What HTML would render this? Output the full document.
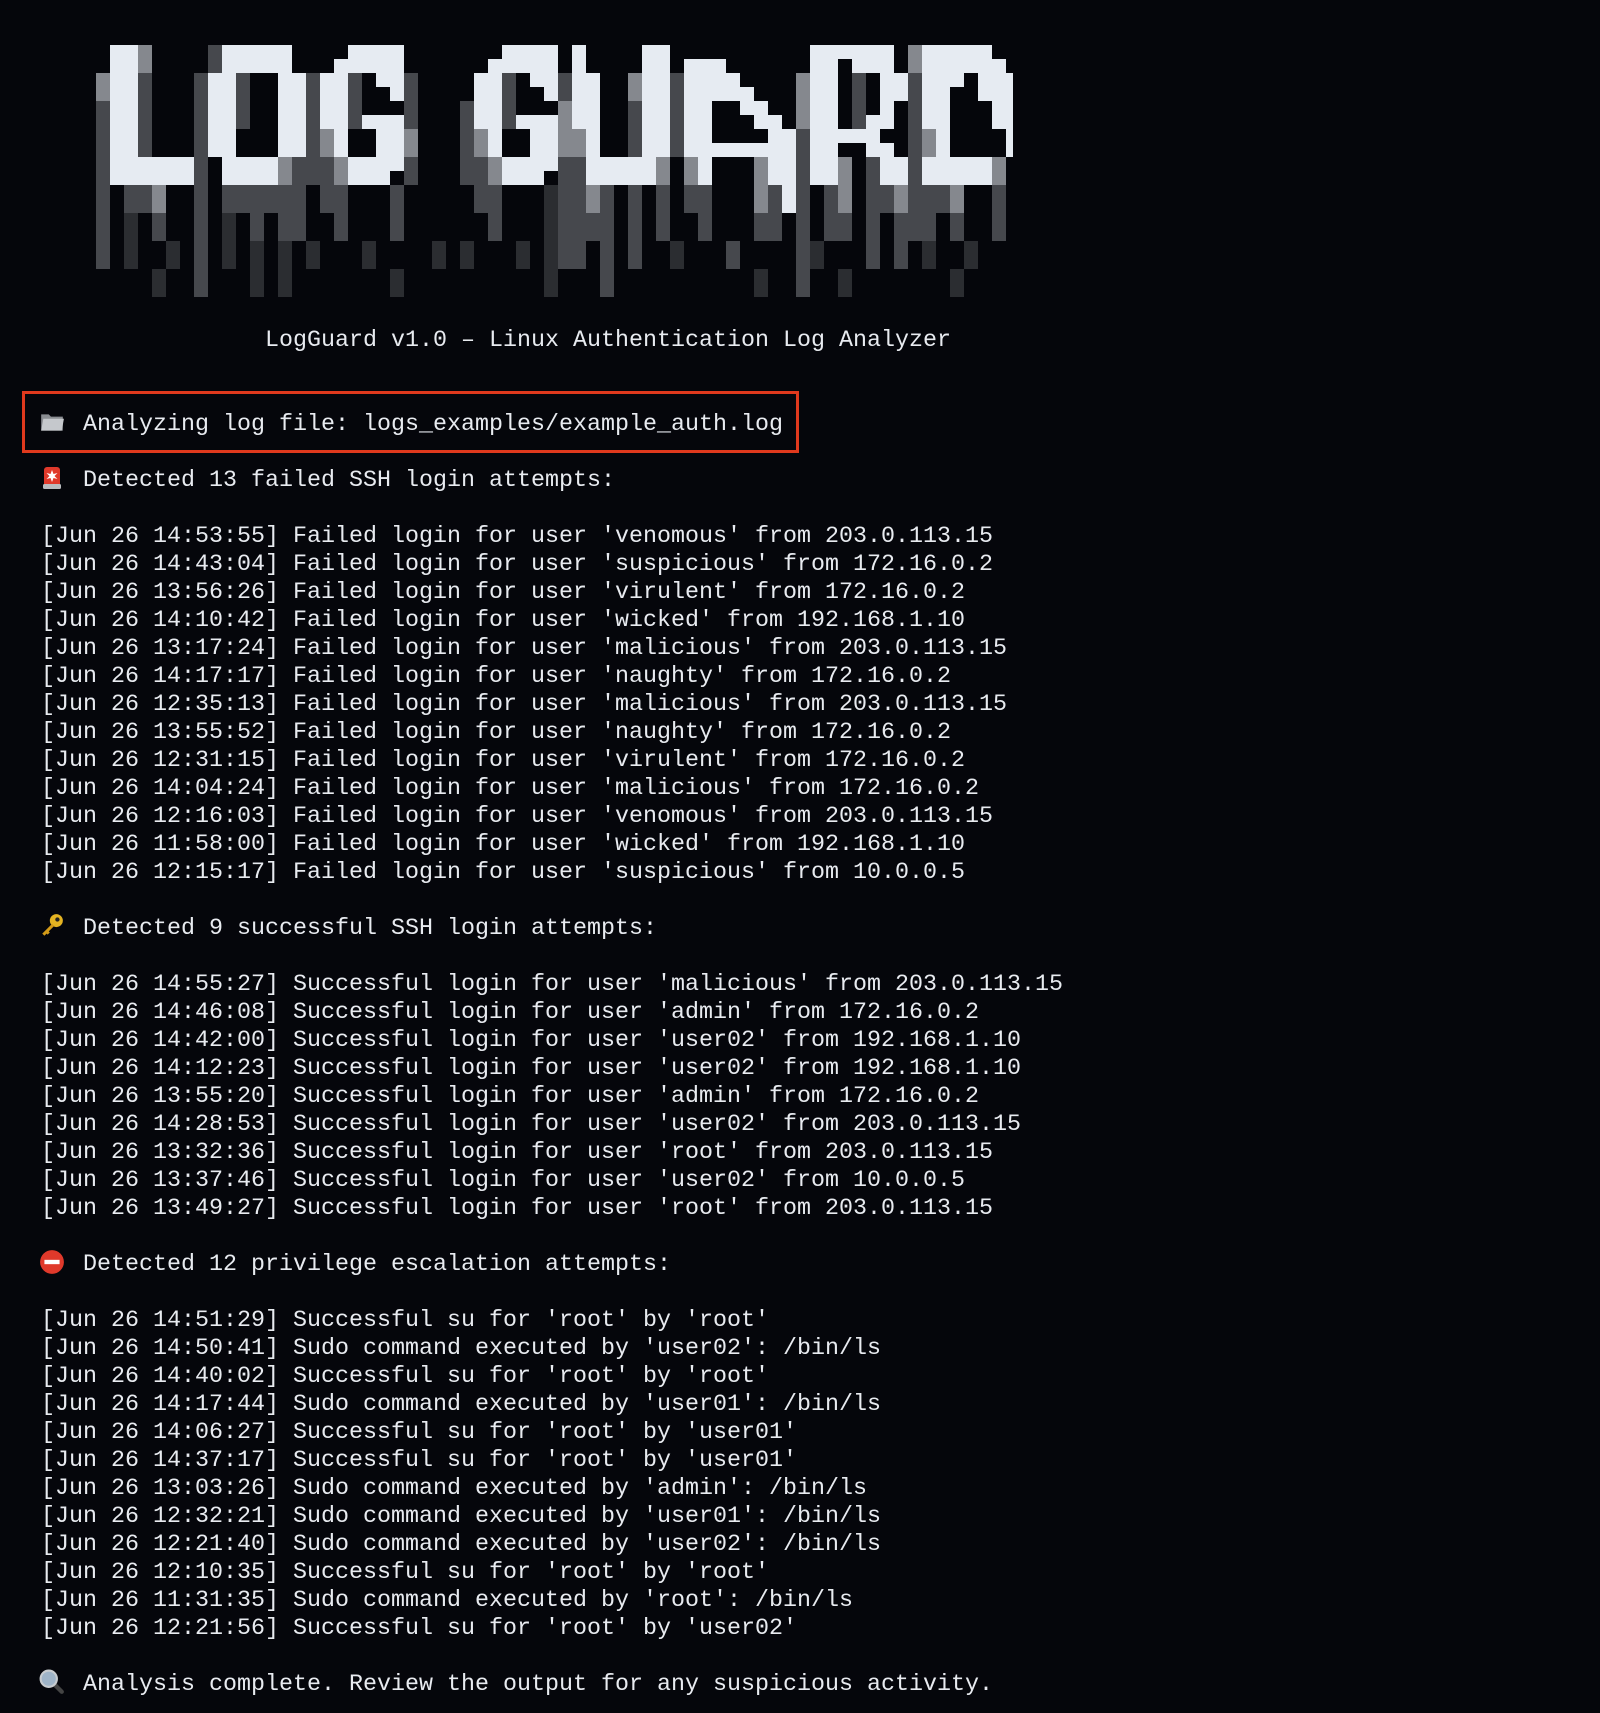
<!DOCTYPE html>
<html><head><meta charset="utf-8">
<style>
html,body{margin:0;padding:0;background:#05060b;}
body{width:1600px;height:1713px;position:relative;overflow:hidden;}
pre{position:absolute;left:41px;top:326.5px;margin:0;font-family:"Liberation Mono",monospace;font-size:23.33px;line-height:28px;color:#e8ebf0;white-space:pre;}
.box{position:absolute;left:22px;top:391px;width:771px;height:56px;border:3px solid #e0391d;}
.ic{position:absolute;left:39px;width:26px;height:26px;}
.w{fill:#e6ebf2}.b{fill:#85888e}.m{fill:#46484d}.s{fill:#2b2d31}
</style></head><body>
<svg style="position:absolute;left:96px;top:45px" width="924" height="252" viewBox="0 0 66 18" shape-rendering="crispEdges">
<g class="b"><rect x="0" y="2" width="1" height="2"/><rect x="3" y="0" width="1" height="2"/><rect x="4" y="10" width="1" height="2"/><rect x="13" y="8" width="1" height="2"/><rect x="16" y="6" width="1" height="2"/><rect x="17" y="8" width="1" height="2"/><rect x="22" y="6" width="1" height="2"/><rect x="27" y="6" width="1" height="2"/><rect x="28" y="8" width="1" height="2"/><rect x="33" y="4" width="1" height="4"/><rect x="34" y="6" width="1" height="2"/><rect x="35" y="10" width="1" height="2"/><rect x="38" y="2" width="1" height="2"/><rect x="40" y="8" width="1" height="2"/><rect x="42" y="8" width="1" height="2"/><rect x="47" y="8" width="1" height="4"/><rect x="50" y="2" width="1" height="4"/><rect x="53" y="8" width="1" height="4"/><rect x="57" y="10" width="1" height="2"/><rect x="58" y="0" width="1" height="2"/><rect x="59" y="6" width="1" height="2"/><rect x="61" y="10" width="1" height="2"/><rect x="64" y="8" width="1" height="2"/></g>
<g class="m"><rect x="0" y="4" width="1" height="12"/><rect x="2" y="10" width="1" height="2"/><rect x="3" y="2" width="1" height="6"/><rect x="3" y="10" width="1" height="2"/><rect x="4" y="12" width="1" height="2"/><rect x="7" y="2" width="1" height="16"/><rect x="8" y="0" width="1" height="2"/><rect x="9" y="10" width="1" height="2"/><rect x="10" y="2" width="1" height="4"/><rect x="10" y="10" width="1" height="2"/><rect x="11" y="10" width="1" height="4"/><rect x="12" y="10" width="1" height="2"/><rect x="13" y="10" width="1" height="4"/><rect x="14" y="8" width="1" height="6"/><rect x="15" y="2" width="1" height="8"/><rect x="16" y="8" width="1" height="4"/><rect x="17" y="10" width="1" height="4"/><rect x="18" y="2" width="1" height="4"/><rect x="21" y="10" width="1" height="4"/><rect x="22" y="2" width="1" height="4"/><rect x="22" y="8" width="1" height="2"/><rect x="26" y="4" width="1" height="6"/><rect x="27" y="8" width="1" height="4"/><rect x="28" y="10" width="1" height="4"/><rect x="29" y="2" width="1" height="4"/><rect x="33" y="2" width="1" height="2"/><rect x="33" y="8" width="1" height="8"/><rect x="34" y="8" width="1" height="8"/><rect x="35" y="12" width="1" height="2"/><rect x="36" y="10" width="1" height="8"/><rect x="38" y="4" width="1" height="4"/><rect x="38" y="10" width="1" height="6"/><rect x="40" y="10" width="1" height="4"/><rect x="41" y="2" width="1" height="6"/><rect x="42" y="10" width="1" height="2"/><rect x="43" y="10" width="1" height="4"/><rect x="45" y="14" width="1" height="2"/><rect x="47" y="12" width="1" height="2"/><rect x="48" y="10" width="1" height="4"/><rect x="50" y="6" width="1" height="12"/><rect x="52" y="10" width="1" height="4"/><rect x="53" y="12" width="1" height="2"/><rect x="54" y="2" width="1" height="4"/><rect x="55" y="8" width="1" height="8"/><rect x="56" y="10" width="1" height="2"/><rect x="57" y="12" width="1" height="4"/><rect x="58" y="2" width="1" height="12"/><rect x="59" y="10" width="1" height="4"/><rect x="60" y="10" width="1" height="2"/><rect x="61" y="12" width="1" height="2"/><rect x="64" y="10" width="1" height="4"/></g>
<g class="s"><rect x="2" y="12" width="1" height="4"/><rect x="4" y="16" width="1" height="2"/><rect x="5" y="14" width="1" height="2"/><rect x="9" y="12" width="1" height="4"/><rect x="11" y="14" width="1" height="4"/><rect x="13" y="14" width="1" height="4"/><rect x="15" y="14" width="1" height="2"/><rect x="19" y="14" width="1" height="2"/><rect x="21" y="16" width="1" height="2"/><rect x="24" y="14" width="1" height="2"/><rect x="26" y="14" width="1" height="2"/><rect x="30" y="14" width="1" height="2"/><rect x="32" y="10" width="1" height="8"/><rect x="41" y="14" width="1" height="2"/><rect x="47" y="16" width="1" height="2"/><rect x="51" y="14" width="1" height="2"/><rect x="53" y="16" width="1" height="2"/><rect x="59" y="14" width="1" height="2"/><rect x="61" y="16" width="1" height="2"/><rect x="62" y="14" width="1" height="2"/></g>
<g class="w">
<rect x="1" y="0" width="2" height="10"/><rect x="1" y="8" width="6" height="2"/>
<rect x="9" y="0" width="5" height="2"/><rect x="8" y="2" width="2" height="6"/><rect x="13" y="2" width="2" height="6"/><rect x="9" y="8" width="4" height="2"/>
<rect x="18" y="0" width="4" height="1"/><rect x="17" y="1" width="5" height="1"/><rect x="17" y="2" width="1" height="6"/><rect x="16" y="2" width="1" height="4"/><rect x="20" y="2" width="2" height="1"/><rect x="21" y="3" width="1" height="1"/><rect x="19" y="5" width="3" height="1"/><rect x="20" y="6" width="2" height="2"/><rect x="18" y="8" width="3" height="2"/><rect x="21" y="8" width="1" height="1"/>
<rect x="29" y="0" width="4" height="1"/><rect x="28" y="1" width="5" height="1"/><rect x="27" y="2" width="2" height="4"/><rect x="28" y="6" width="1" height="2"/><rect x="31" y="2" width="2" height="1"/><rect x="32" y="3" width="1" height="1"/><rect x="30" y="5" width="3" height="1"/><rect x="31" y="6" width="2" height="2"/><rect x="29" y="8" width="4" height="1"/><rect x="29" y="9" width="3" height="1"/>
<rect x="34" y="0" width="1" height="6"/><rect x="35" y="2" width="1" height="8"/><rect x="35" y="8" width="5" height="2"/><rect x="39" y="0" width="2" height="8"/>
<rect x="42" y="1" width="3" height="1"/><rect x="42" y="2" width="4" height="1"/><rect x="42" y="3" width="5" height="1"/><rect x="42" y="4" width="2" height="3"/><rect x="46" y="4" width="2" height="1"/><rect x="47" y="5" width="2" height="1"/><rect x="48" y="6" width="2" height="1"/><rect x="42" y="7" width="8" height="1"/><rect x="43" y="8" width="1" height="2"/><rect x="48" y="8" width="2" height="2"/><rect x="49" y="10" width="1" height="2"/>
<rect x="51" y="0" width="2" height="10"/><rect x="53" y="0" width="4" height="1"/><rect x="54" y="1" width="3" height="1"/><rect x="53" y="6" width="3" height="1"/><rect x="55" y="5" width="1" height="1"/><rect x="56" y="2" width="2" height="2"/><rect x="56" y="4" width="1" height="2"/><rect x="55" y="7" width="2" height="1"/><rect x="56" y="8" width="2" height="2"/>
<rect x="59" y="0" width="5" height="2"/><rect x="63" y="1" width="2" height="1"/><rect x="60" y="2" width="1" height="8"/><rect x="59" y="2" width="1" height="4"/><rect x="59" y="8" width="1" height="2"/><rect x="61" y="2" width="1" height="1"/><rect x="63" y="2" width="2.5" height="2"/><rect x="64" y="4" width="1.5" height="2"/><rect x="65" y="6" width="0.5" height="2"/><rect x="60" y="8" width="4" height="2"/>
</g>
</svg>
<div class="box"></div>
<svg class="ic" style="top:409px" viewBox="0 0 24 24"><path d="M2 5h7l2 2h11v13H2z" fill="#8a8d92"/><path d="M4 9h19l-2 11H2z" fill="#c5c8cc"/></svg>
<svg class="ic" style="top:465px;left:42px;width:20px" viewBox="0 0 20 26"><rect x="2" y="2" width="16" height="20" rx="3" fill="#e0392b"/><rect x="1" y="19" width="18" height="5" rx="1.5" fill="#b9bcc0"/><path d="M10 5l1.5 4 4-1-3 3 3 3-4-1-1.5 4-1.5-4-4 1 3-3-3-3 4 1z" fill="#fff"/></svg>
<svg class="ic" style="top:913px" viewBox="0 0 24 24"><circle cx="16" cy="7" r="6" fill="#e4b322"/><circle cx="17" cy="6" r="2" fill="#222"/><path d="M12 10L3 19l2 2 2-2 1 1 2-2-1-1 5-5z" fill="#d49b18"/></svg>
<svg class="ic" style="top:1249px" viewBox="0 0 24 24"><circle cx="12" cy="12" r="11" fill="#e0392b"/><rect x="5" y="10" width="14" height="4" fill="#fff"/></svg>
<svg class="ic" style="top:1669px" viewBox="0 0 24 24"><path d="M14 14l7 7" stroke="#444" stroke-width="4" stroke-linecap="round"/><circle cx="9" cy="9" r="7.5" fill="#9fb4c8" stroke="#c8ccd0" stroke-width="2"/></svg>
<pre>                LogGuard v1.0 – Linux Authentication Log Analyzer


   Analyzing log file: logs_examples/example_auth.log

   Detected 13 failed SSH login attempts:

[Jun 26 14:53:55] Failed login for user 'venomous' from 203.0.113.15
[Jun 26 14:43:04] Failed login for user 'suspicious' from 172.16.0.2
[Jun 26 13:56:26] Failed login for user 'virulent' from 172.16.0.2
[Jun 26 14:10:42] Failed login for user 'wicked' from 192.168.1.10
[Jun 26 13:17:24] Failed login for user 'malicious' from 203.0.113.15
[Jun 26 14:17:17] Failed login for user 'naughty' from 172.16.0.2
[Jun 26 12:35:13] Failed login for user 'malicious' from 203.0.113.15
[Jun 26 13:55:52] Failed login for user 'naughty' from 172.16.0.2
[Jun 26 12:31:15] Failed login for user 'virulent' from 172.16.0.2
[Jun 26 14:04:24] Failed login for user 'malicious' from 172.16.0.2
[Jun 26 12:16:03] Failed login for user 'venomous' from 203.0.113.15
[Jun 26 11:58:00] Failed login for user 'wicked' from 192.168.1.10
[Jun 26 12:15:17] Failed login for user 'suspicious' from 10.0.0.5

   Detected 9 successful SSH login attempts:

[Jun 26 14:55:27] Successful login for user 'malicious' from 203.0.113.15
[Jun 26 14:46:08] Successful login for user 'admin' from 172.16.0.2
[Jun 26 14:42:00] Successful login for user 'user02' from 192.168.1.10
[Jun 26 14:12:23] Successful login for user 'user02' from 192.168.1.10
[Jun 26 13:55:20] Successful login for user 'admin' from 172.16.0.2
[Jun 26 14:28:53] Successful login for user 'user02' from 203.0.113.15
[Jun 26 13:32:36] Successful login for user 'root' from 203.0.113.15
[Jun 26 13:37:46] Successful login for user 'user02' from 10.0.0.5
[Jun 26 13:49:27] Successful login for user 'root' from 203.0.113.15

   Detected 12 privilege escalation attempts:

[Jun 26 14:51:29] Successful su for 'root' by 'root'
[Jun 26 14:50:41] Sudo command executed by 'user02': /bin/ls
[Jun 26 14:40:02] Successful su for 'root' by 'root'
[Jun 26 14:17:44] Sudo command executed by 'user01': /bin/ls
[Jun 26 14:06:27] Successful su for 'root' by 'user01'
[Jun 26 14:37:17] Successful su for 'root' by 'user01'
[Jun 26 13:03:26] Sudo command executed by 'admin': /bin/ls
[Jun 26 12:32:21] Sudo command executed by 'user01': /bin/ls
[Jun 26 12:21:40] Sudo command executed by 'user02': /bin/ls
[Jun 26 12:10:35] Successful su for 'root' by 'root'
[Jun 26 11:31:35] Sudo command executed by 'root': /bin/ls
[Jun 26 12:21:56] Successful su for 'root' by 'user02'

   Analysis complete. Review the output for any suspicious activity.</pre>
</body></html>
